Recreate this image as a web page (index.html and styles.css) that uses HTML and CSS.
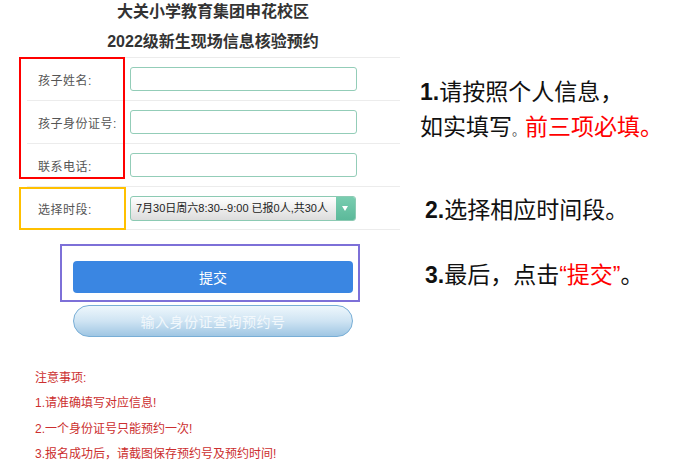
FILE: index.html
```html
<!DOCTYPE html>
<html lang="zh-CN">
<head>
<meta charset="UTF-8" />
<meta name="viewport" content="width=device-width, initial-scale=1" />
<title>2022级新生现场信息核验预约</title>
<link rel="stylesheet" href="styles.css">
</head>
<body>

<div class="page">
  <!-- 左侧：报名表单截图 -->
  <section class="form-panel">
    <div class="title">大关小学教育集团申花校区</div>
    <div class="title title-sub">2022级新生现场信息核验预约</div>

    <div class="rows">
      <div class="row">
        <label class="row-label">孩子姓名:</label>
        <input class="field" type="text" />
      </div>
      <div class="row">
        <label class="row-label">孩子身份证号:</label>
        <input class="field" type="text" />
      </div>
      <div class="row">
        <label class="row-label">联系电话:</label>
        <input class="field" type="text" />
      </div>
      <div class="row">
        <label class="row-label">选择时段:</label>
        <div class="select">
          <span class="select-text">7月30日周六8:30--9:00 已报0人,共30人</span>
          <span class="select-arrow"></span>
        </div>
      </div>
    </div>

    <div class="actions">
      <button class="btn-submit">提交</button>
      <button class="btn-query">输入身份证查询预约号</button>
    </div>

    <div class="notes">
      <p>注意事项:</p>
      <p>1.请准确填写对应信息!</p>
      <p>2.一个身份证号只能预约一次!</p>
      <p>3.报名成功后，请截图保存预约号及预约时间!</p>
    </div>

    <!-- 标注框 -->
    <div class="mark mark-red"></div>
    <div class="mark mark-yellow"></div>
    <div class="mark mark-purple"></div>
  </section>

  <!-- 右侧：说明文字 -->
  <section class="tips">
    <p class="tip tip-first"><b>1.</b>请按照个人信息，<br>如实填写<span class="dot">。</span><span class="red">前三项必填。</span></p>
    <p class="tip tip-second"><b>2.</b>选择相应时间段。</p>
    <p class="tip tip-third"><b>3.</b>最后，点击<span class="red">“提交”</span>。</p>
  </section>
</div>

</body>
</html>
```

FILE: styles.css
```css
/* Reset básico */
* {
  margin: 0;
  padding: 0;
  box-sizing: border-box;
}
body {
  font-family: "Liberation Sans", "Noto Sans CJK SC", sans-serif;
  background: #ffffff;
  color: #333;
  width: 674px;
  height: 474px;
  overflow: hidden;
}

.page {
  display: flex;
}

/* Panel izquierdo */
.form-panel {
  position: relative;
  width: 400px;
  height: 474px;
}

.title {
  text-align: center;
  font-size: 16px;
  font-weight: 700;
  line-height: 24px;
  color: #333;
  padding-left: 26px;
}
.title-sub {
  margin-top: 6px;
  padding-left: 26px;
}

.rows {
  margin-top: 3px;
  margin-left: 27px;
  border-top: 1px solid #ececec;
}
.row {
  display: flex;
  align-items: center;
  height: 43px;
  border-bottom: 1px solid #ececec;
}
.row-label {
  width: 103px;
  padding-left: 11px;
  font-size: 12px;
  color: #555;
  letter-spacing: 0.5px;
}
.field {
  width: 227px;
  height: 24px;
  border: 1px solid #93cdb8;
  border-radius: 3px;
  background: #fff;
  outline: none;
}

.select {
  display: flex;
  width: 226px;
  height: 25px;
  border: 1px solid #8ccab3;
  border-radius: 3px;
  overflow: hidden;
  background: linear-gradient(180deg, #ffffff 0%, #dcdcdc 100%);
}
.select-text {
  flex: 1;
  font-size: 11px;
  line-height: 23px;
  padding-left: 5px;
  color: #222;
  white-space: nowrap;
}
.select-arrow {
  width: 19px;
  background: linear-gradient(180deg, #79cdb0 0%, #5cb99a 100%);
  position: relative;
}
.select-arrow::after {
  content: "";
  position: absolute;
  left: 6px;
  top: 9px;
  border-left: 3.5px solid transparent;
  border-right: 3.5px solid transparent;
  border-top: 5px solid #fff;
}

/* Botones */
.actions {
  display: flex;
  flex-direction: column;
  gap: 12px;
  margin-top: 31px;
  margin-left: 73px;
  width: 280px;
}
.btn-submit {
  height: 32px;
  border: none;
  border-radius: 4px;
  background: #3a86e2;
  color: #fff;
  font-family: inherit;
  font-size: 14px;
}
.btn-query {
  height: 32px;
  border: 1px solid #78aed6;
  border-radius: 16px;
  background: linear-gradient(180deg, #eef7fc 0%, #cfe4f3 50%, #9fc6e3 100%);
  color: #f2f8fc;
  font-family: inherit;
  font-size: 14px;
  letter-spacing: 0.5px;
}

/* Notas */
.notes {
  margin-top: 29px;
  margin-left: 35px;
  font-size: 12px;
  line-height: 25.3px;
  color: #cc2f2f;
}

/* Recuadros de anotación */
.mark {
  position: absolute;
  border: 2px solid;
}
.mark-red {
  left: 19px;
  top: 57px;
  width: 106px;
  height: 122px;
  border-color: #ff0000;
}
.mark-yellow {
  left: 19px;
  top: 187px;
  width: 107px;
  height: 43px;
  border-color: #ffc000;
}
.mark-purple {
  left: 60px;
  top: 244px;
  width: 300px;
  height: 58px;
  border-color: #7d70d8;
}

/* Texto derecho */
.tips {
  padding-top: 75px;
  padding-left: 20px;
  font-family: "Liberation Sans", "Noto Sans CJK SC", sans-serif;
  font-size: 23px;
  line-height: 35px;
  color: #111;
}
.tip b {
  font-weight: 700;
}
.tip .red {
  color: #ff0000;
}
.tip .dot {
  font-size: 13px;
  color: #555;
}
.tip-second {
  margin-top: 45px;
  margin-left: 5px;
}
.tip-third {
  margin-top: 30px;
  margin-left: 5px;
}
```
